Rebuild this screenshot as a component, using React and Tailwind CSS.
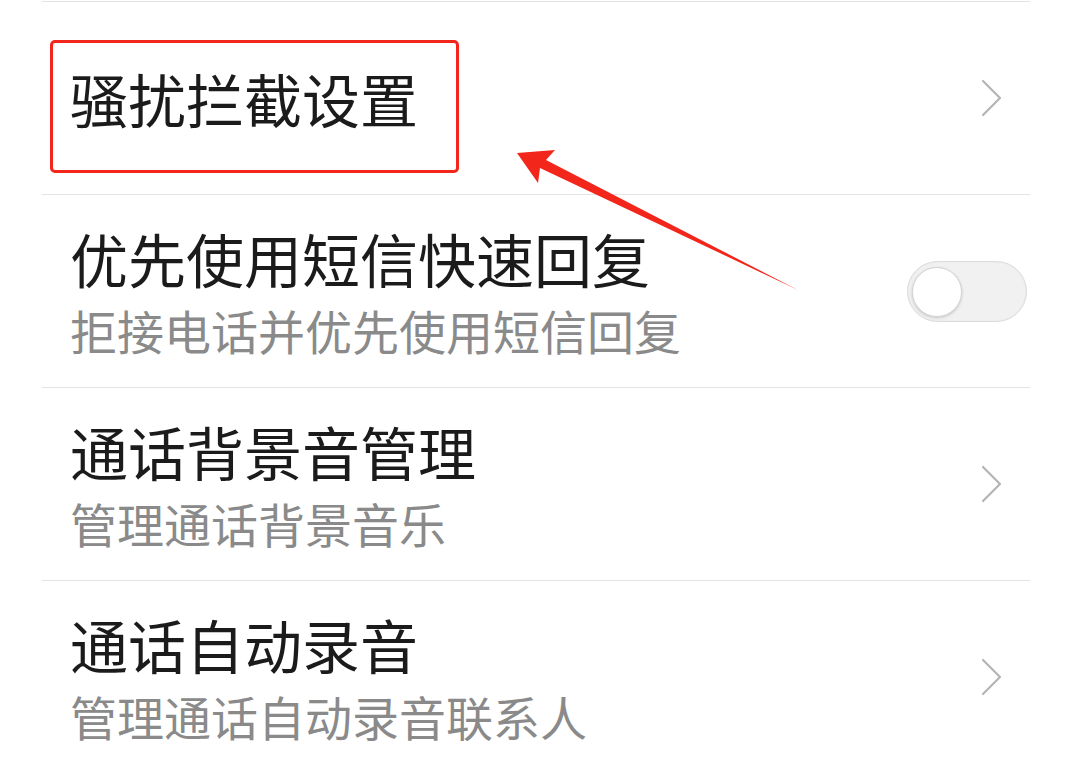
import React from "react";

const font = { fontFamily: '"Noto Sans CJK SC", "Noto Sans", sans-serif' };

function Chevron() {
  return (
    <svg width="24" height="40" viewBox="0 0 24 40" className="mr-[26px]">
      <polyline points="3,3 20,20 3,37" fill="none" stroke="#b4b4b4" strokeWidth="2.2" strokeLinecap="round" strokeLinejoin="round" />
    </svg>
  );
}

function Toggle() {
  return (
    <div className="relative w-[120px] h-[61px] rounded-full bg-[#f1f1f1] border border-[#dcdcdc] shadow-[inset_0_0_2px_rgba(0,0,0,0.06)]">
      <div className="absolute left-[4px] top-[5px] w-[50px] h-[50px] rounded-full bg-white border border-[#d4d4d4] shadow-[0_1px_3px_rgba(0,0,0,0.18)]" />
    </div>
  );
}

function Row({ title, sub, right }) {
  return (
    <div className="h-[193px] border-t border-[#e3e3e3] flex items-center justify-between pl-[28px]">
      <div className="flex flex-col">
        <div className="text-[58px] leading-[68px] text-[#1b1b1b]">{title}</div>
        {sub && <div className="text-[47px] leading-[56px] mt-[10px] text-[#8a8a8a]">{sub}</div>}
      </div>
      {right}
    </div>
  );
}

export default function App() {
  return (
    <div className="relative w-[1078px] h-[769px] bg-white overflow-hidden" style={font}>
      <div className="pt-[1px] pl-[42px] w-[1030px]">
        <Row title="骚扰拦截设置" right={<Chevron />} />
        <Row title="优先使用短信快速回复" sub="拒接电话并优先使用短信回复" right={<div className="mr-[3px]"><Toggle /></div>} />
        <Row title="通话背景音管理" sub="管理通话背景音乐" right={<Chevron />} />
        <Row title="通话自动录音" sub="管理通话自动录音联系人" right={<Chevron />} />
      </div>
      <div className="absolute left-[50px] top-[40px] w-[409px] h-[133px] border-[3px] border-[#f3261c] rounded-[5px]" />
      <svg className="absolute left-0 top-0" width="1078" height="769" viewBox="0 0 1078 769">
        <polygon points="517,153 555,150 546,160 798,290 540,168 538,183" fill="#f3261c" />
      </svg>
    </div>
  );
}
